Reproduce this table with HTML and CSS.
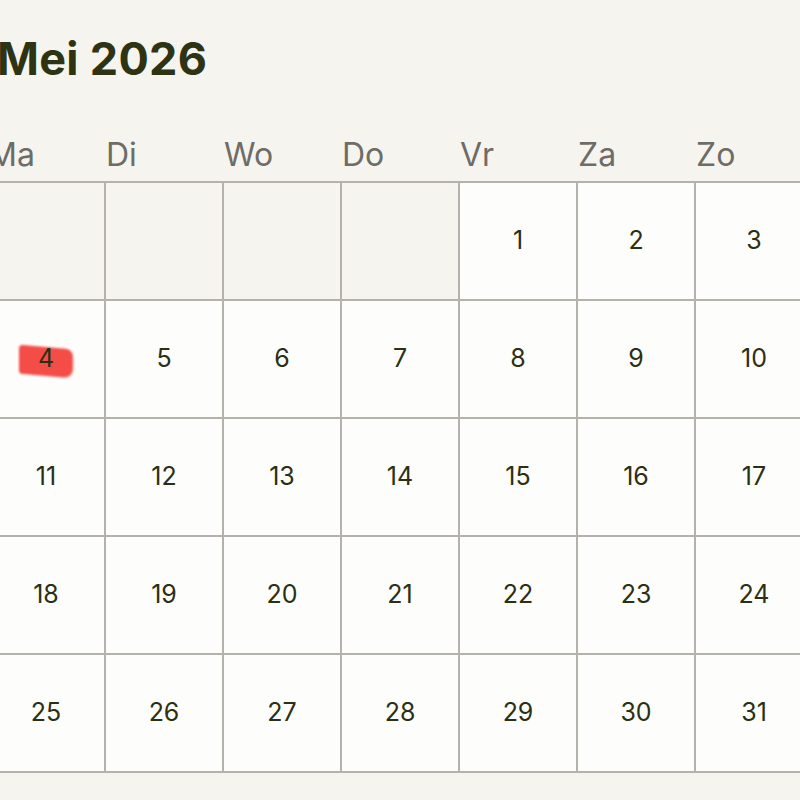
FILE: index.html
```html
<!DOCTYPE html>
<html lang="nl">
<head>
<meta charset="utf-8">
<title>Mei 2026</title>
<link rel="stylesheet" href="styles.css">
</head>
<body>
<main class="calendar">
  <h1 class="title">Mei 2026</h1>
  <div class="weekdays">
    <span>Ma</span><span>Di</span><span>Wo</span><span>Do</span><span>Vr</span><span>Za</span><span>Zo</span>
  </div>
  <div class="grid">
    <div class="cell empty"></div>
    <div class="cell empty"></div>
    <div class="cell empty"></div>
    <div class="cell empty"></div>
    <div class="cell"><span class="num">1</span></div>
    <div class="cell"><span class="num">2</span></div>
    <div class="cell"><span class="num">3</span></div>
    <div class="cell today"><span class="mark"></span><span class="num">4</span></div>
    <div class="cell"><span class="num">5</span></div>
    <div class="cell"><span class="num">6</span></div>
    <div class="cell"><span class="num">7</span></div>
    <div class="cell"><span class="num">8</span></div>
    <div class="cell"><span class="num">9</span></div>
    <div class="cell"><span class="num">10</span></div>
    <div class="cell"><span class="num">11</span></div>
    <div class="cell"><span class="num">12</span></div>
    <div class="cell"><span class="num">13</span></div>
    <div class="cell"><span class="num">14</span></div>
    <div class="cell"><span class="num">15</span></div>
    <div class="cell"><span class="num">16</span></div>
    <div class="cell"><span class="num">17</span></div>
    <div class="cell"><span class="num">18</span></div>
    <div class="cell"><span class="num">19</span></div>
    <div class="cell"><span class="num">20</span></div>
    <div class="cell"><span class="num">21</span></div>
    <div class="cell"><span class="num">22</span></div>
    <div class="cell"><span class="num">23</span></div>
    <div class="cell"><span class="num">24</span></div>
    <div class="cell"><span class="num">25</span></div>
    <div class="cell"><span class="num">26</span></div>
    <div class="cell"><span class="num">27</span></div>
    <div class="cell"><span class="num">28</span></div>
    <div class="cell"><span class="num">29</span></div>
    <div class="cell"><span class="num">30</span></div>
    <div class="cell"><span class="num">31</span></div>
  </div>
</main>
</body>
</html>
```

FILE: styles.css
```css
html, body {
  margin: 0;
  padding: 0;
  background: #f5f4ee;
  overflow: hidden;
}

body {
  font-family: Inter, "Noto Sans", sans-serif;
  width: 800px;
  height: 800px;
}

.calendar {
  margin-left: -14px;
  width: 828px;
}

.title {
  margin: 0;
  padding: 36px 0 0 11px;
  height: 45px;
  font-size: 45px;
  line-height: 45px;
  font-weight: 700;
  letter-spacing: 0.3px;
  color: #2e3413;
}

.weekdays {
  margin-top: 56px;
  padding-top: 1px;
  height: 43px;
  display: grid;
  grid-template-columns: repeat(7, 118px);
  padding-left: 2px;
  font-size: 32px;
  line-height: 33px;
  font-weight: 400;
  color: #6d6c66;
}

.grid {
  display: grid;
  grid-template-columns: repeat(7, 116px);
  grid-auto-rows: 116px;
  gap: 2px;
  padding: 2px;
  background: #b4b2aa;
}

.cell {
  position: relative;
  background: #fdfdfc;
  display: flex;
  align-items: center;
  justify-content: center;
  padding-bottom: 3px;
  box-sizing: border-box;
}

.cell.empty {
  background: #f5f4ee;
}

.num {
  position: relative;
  z-index: 1;
  font-size: 25px;
  color: #2b2f14;
}

.mark {
  position: absolute;
  left: 31px;
  top: 46px;
  width: 54px;
  height: 29px;
  background: #f4443f;
  border-radius: 4px 7px 9px 3px;
  transform: skewY(5deg);
  filter: blur(0.8px);
  opacity: 0.95;
}
```
